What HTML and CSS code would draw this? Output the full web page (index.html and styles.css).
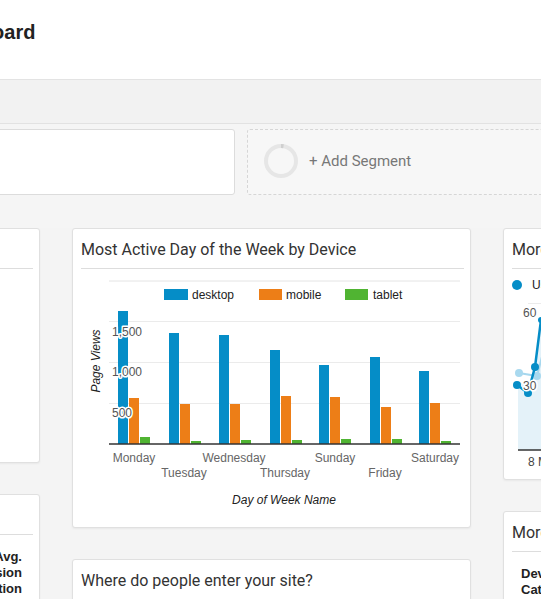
FILE: index.html
```html
<!DOCTYPE html>
<html lang="en">
<head>
<meta charset="utf-8">
<title>Dashboard</title>
<link rel="stylesheet" href="styles.css">
</head>
<body>
<header class="topbar">
  <h1 class="page-title">Dashboard</h1>
</header>
<div class="toolbar"></div>
<section class="segments">
  <div class="segment-box"></div>
  <div class="segment-add">
    <svg class="seg-ring" width="34" height="34" viewBox="0 0 34 34">
      <circle cx="17" cy="17" r="15" fill="none" stroke="#e6e6e6" stroke-width="4"/>
      <path d="M17 2 A15 15 0 0 1 19.5 2.2" fill="none" stroke="#cfcfcf" stroke-width="4"/>
    </svg>
    <span class="seg-label">+ Add Segment</span>
  </div>
</section>
<main class="grid">
  <div class="col">
    <div class="card">
      <div class="card-head">Sessions by Source</div>
      <div class="card-body empty"></div>
    </div>
    <div class="card">
      <div class="card-head">Engagement by Page</div>
      <div class="card-body table-body align-end">
        <div class="th th-right">Avg. Session Duration</div>
      </div>
    </div>
  </div>
  <div class="col">
    <div class="card">
      <div class="card-head">Most Active Day of the Week by Device</div>
      <svg class="chart" width="383" height="258" viewBox="0 0 383 258">
        <line x1="28" y1="12" x2="379" y2="12" class="grid-top"/>
        <line x1="28" y1="52.5" x2="379" y2="52.5" class="gridline"/>
        <line x1="28" y1="93.5" x2="379" y2="93.5" class="gridline"/>
        <line x1="28" y1="134.5" x2="379" y2="134.5" class="gridline"/>
        <rect x="83" y="20" width="24" height="11" fill="#058dc7"/>
        <text x="111" y="30" class="legend">desktop</text>
        <rect x="178" y="20" width="23" height="11" fill="#ed7e17"/>
        <text x="205" y="30" class="legend">mobile</text>
        <rect x="264" y="20" width="23" height="11" fill="#50b432"/>
        <text x="292" y="30" class="legend">tablet</text>

        <rect x="37" y="42" width="10" height="133" fill="#058dc7"/>
        <rect x="48" y="129" width="10" height="46" fill="#ed7e17"/>
        <rect x="59" y="168" width="10" height="7" fill="#50b432"/>

        <rect x="88" y="64" width="10" height="111" fill="#058dc7"/>
        <rect x="99" y="135" width="10" height="40" fill="#ed7e17"/>
        <rect x="110" y="172" width="10" height="3" fill="#50b432"/>

        <rect x="138" y="66" width="10" height="109" fill="#058dc7"/>
        <rect x="149" y="135" width="10" height="40" fill="#ed7e17"/>
        <rect x="160" y="171" width="10" height="4" fill="#50b432"/>

        <rect x="189" y="81" width="10" height="94" fill="#058dc7"/>
        <rect x="200" y="127" width="10" height="48" fill="#ed7e17"/>
        <rect x="211" y="171" width="10" height="4" fill="#50b432"/>

        <rect x="238" y="96" width="10" height="79" fill="#058dc7"/>
        <rect x="249" y="128" width="10" height="47" fill="#ed7e17"/>
        <rect x="260" y="170" width="10" height="5" fill="#50b432"/>

        <rect x="289" y="88" width="10" height="87" fill="#058dc7"/>
        <rect x="300" y="138" width="10" height="37" fill="#ed7e17"/>
        <rect x="311" y="170" width="10" height="5" fill="#50b432"/>

        <rect x="338" y="102" width="10" height="73" fill="#058dc7"/>
        <rect x="349" y="134" width="10" height="41" fill="#ed7e17"/>
        <rect x="360" y="172" width="10" height="3" fill="#50b432"/>

        <line x1="28" y1="175" x2="379" y2="175" class="baseline"/>

        <text x="31" y="67" class="ylab">1,500</text>
        <text x="31" y="107" class="ylab">1,000</text>
        <text x="31" y="148" class="ylab">500</text>
        <text transform="translate(19,92) rotate(-90)" class="axis-title" text-anchor="middle">Page Views</text>

        <text x="53" y="193" class="xlab">Monday</text>
        <text x="103" y="208" class="xlab">Tuesday</text>
        <text x="153" y="193" class="xlab">Wednesday</text>
        <text x="204" y="208" class="xlab">Thursday</text>
        <text x="254" y="193" class="xlab">Sunday</text>
        <text x="304" y="208" class="xlab">Friday</text>
        <text x="354" y="193" class="xlab">Saturday</text>
        <text x="203" y="235" class="axis-title" text-anchor="middle">Day of Week Name</text>
      </svg>
    </div>
    <div class="card">
      <div class="card-head">Where do people enter your site?</div>
      <div class="card-body empty"></div>
    </div>
  </div>
  <div class="col">
    <div class="card">
      <div class="card-head">More Users on Mobile?</div>
      <svg class="chart" width="383" height="210" viewBox="0 0 383 210">
        <circle cx="5" cy="16" r="5" fill="#058dc7"/>
        <text x="20" y="20" class="legend">Users</text>
        <line x1="16" y1="34.5" x2="383" y2="34.5" class="gridline"/>
        <polygon points="6,112 16,118 23,98 29,51 40,40 40,181 6,181" fill="#e4f2f9"/>
        <polyline points="7,104 25,107 32,80 40,70" fill="none" stroke="#a6d7ee" stroke-width="2"/>
        <circle cx="7" cy="104" r="4" fill="#a9d9ef"/>
        <circle cx="25" cy="107" r="4" fill="#a9d9ef"/>
        <polyline points="5,116 16,124 23,98 29,51 40,30" fill="none" stroke="#058dc7" stroke-width="2.5"/>
        <circle cx="5" cy="116" r="4" fill="#058dc7"/>
        <circle cx="16" cy="124" r="4" fill="#058dc7"/>
        <circle cx="23" cy="98" r="4" fill="#058dc7"/>
        <circle cx="29" cy="51" r="3" fill="#058dc7"/>
        <line x1="6" y1="181" x2="383" y2="181" class="baseline"/>
        <text x="11" y="48" class="ylab">60</text>
        <text x="11" y="121" class="ylab">30</text>
        <text x="16" y="197" class="xlab-start">8 Mar</text>
      </svg>
    </div>
    <div class="card">
      <div class="card-head">More Sessions by Device?</div>
      <div class="card-body table-body">
        <div class="th th-left">Device Category</div>
      </div>
    </div>
  </div>
</main>
</body>
</html>
```

FILE: styles.css
```css
html, body {
  margin: 0;
  padding: 0;
}
body {
  width: 541px;
  height: 599px;
  overflow: hidden;
  background: #f4f4f4;
  font-family: Roboto, "Liberation Sans", Arial, sans-serif;
  color: #333;
}
.topbar {
  height: 79px;
  background: #fff;
  border-bottom: 1px solid #e3e3e3;
  overflow: hidden;
}
.page-title {
  margin: 0 0 0 -69px;
  padding-top: 20px;
  font-family: "Liberation Sans", Arial, sans-serif;
  font-size: 20px;
  line-height: 24px;
  font-weight: bold;
  color: #222;
  white-space: nowrap;
}
.toolbar {
  height: 43px;
  background: #f2f2f2;
  border-bottom: 1px solid #e2e2e2;
}
.segments {
  display: flex;
  gap: 12px;
  margin-left: -67px;
  padding: 5px 0 33px;
  background: #f5f5f5;
}
.segment-box {
  flex: none;
  width: 300px;
  height: 64px;
  background: #fff;
  border: 1px solid #dcdcdc;
  border-radius: 3px;
}
.segment-add {
  flex: none;
  width: 400px;
  height: 64px;
  border: 1px dashed #d6d6d6;
  border-radius: 3px;
  background: #f7f7f7;
  display: flex;
  align-items: center;
  padding-left: 16px;
  gap: 11px;
}
.seg-ring {
  display: block;
  margin-top: -2px;
}
.seg-label {
  font-size: 15px;
  color: #777;
  margin-top: -2px;
}
.grid {
  display: grid;
  grid-template-columns: 399px 399px 399px;
  column-gap: 32px;
  margin-left: -359px;
  align-items: start;
}
.col {
  display: flex;
  flex-direction: column;
  gap: 31px;
}
.card {
  background: #fff;
  border: 1px solid #e0e0e0;
  border-radius: 3px;
  box-shadow: 0 1px 2px rgba(0, 0, 0, 0.05);
}
.card-head {
  margin: 0 6px 0 8px;
  padding: 11px 0 8px;
  border-bottom: 1px solid #dddddd;
  font-size: 16px;
  line-height: 20px;
  color: #333;
  white-space: nowrap;
  overflow: hidden;
}
.card-body.empty {
  height: 193px;
}
.chart {
  display: block;
  margin-left: 8px;
  font-family: "Liberation Sans", Arial, sans-serif;
  font-size: 12px;
}
.table-body {
  display: flex;
  padding: 14px 17px 10px 17px;
  min-height: 60px;
}
.align-end {
  justify-content: flex-end;
}
.th {
  font-family: "Liberation Sans", Arial, sans-serif;
  font-size: 13px;
  line-height: 16px;
  font-weight: bold;
  color: #222;
  width: 62px;
}
.th-right {
  text-align: right;
}
.th-left {
  text-align: left;
}
.grid-top {
  stroke: #e4e4e4;
  stroke-width: 1;
}
.gridline {
  stroke: #ebebeb;
  stroke-width: 1;
}
.baseline {
  stroke: #333;
  stroke-width: 1.5;
}
.legend {
  fill: #222;
}
.ylab {
  fill: #555;
  stroke: #fff;
  stroke-width: 3px;
  stroke-linejoin: round;
  paint-order: stroke;
}
.xlab {
  fill: #666;
  text-anchor: middle;
}
.xlab-start {
  fill: #444;
}
.axis-title {
  fill: #222;
  font-style: italic;
}
```
